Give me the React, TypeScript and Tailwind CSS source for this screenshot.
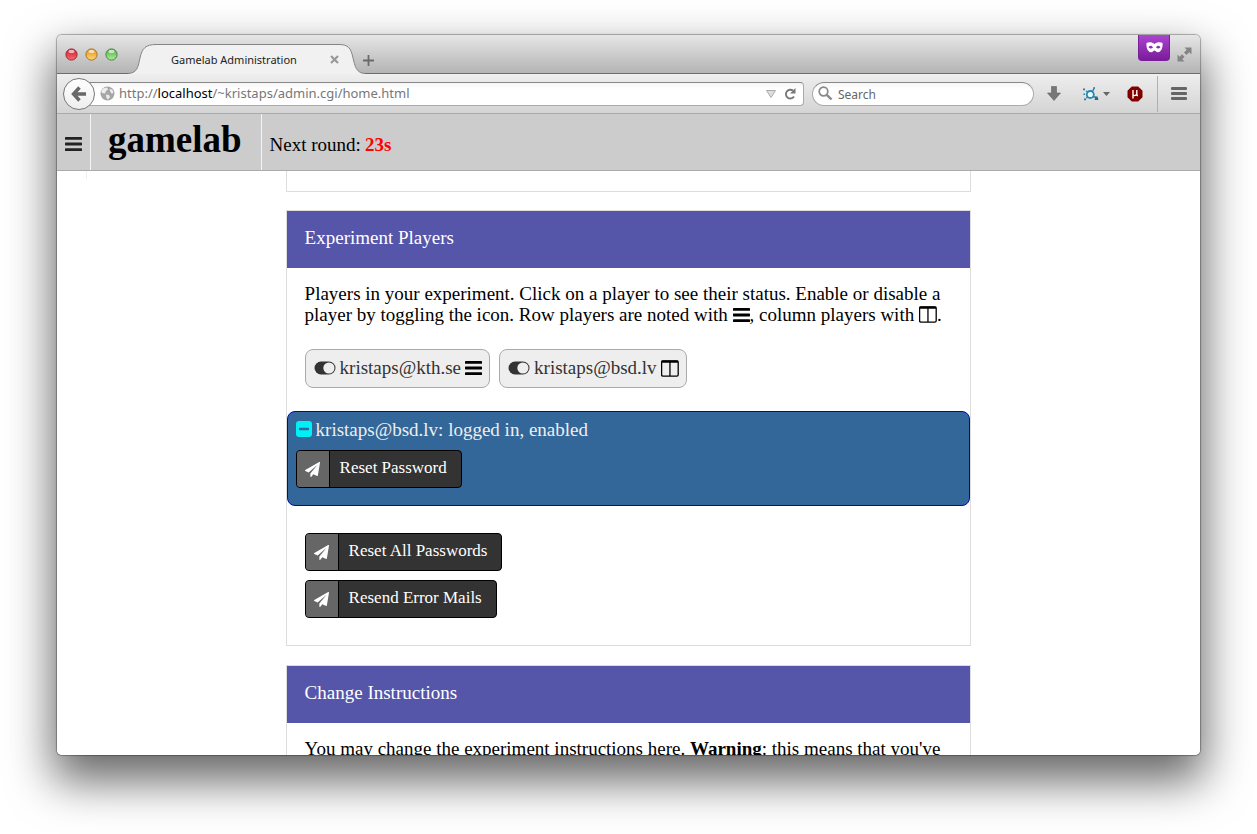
import type { ReactNode } from "react";

const HEADER_CELL = "flex items-center border-r border-[#f4f4f4]";

function BarsIcon({ className = "" }: { className?: string }) {
  return (
    <svg className={className} width="17" height="14" viewBox="0 0 17 14" fill="currentColor" aria-hidden="true">
      <rect x="0" y="0" width="17" height="2.8" rx="0.6" />
      <rect x="0" y="5.6" width="17" height="2.8" rx="0.6" />
      <rect x="0" y="11.2" width="17" height="2.8" rx="0.6" />
    </svg>
  );
}

function ColumnsIcon({ className = "" }: { className?: string }) {
  return (
    <svg className={className} width="18" height="17" viewBox="0 0 18 17" aria-hidden="true">
      <rect x="0.6" y="1" width="16.6" height="15.2" rx="1.4" fill="none" stroke="currentColor" strokeWidth="1.3" />
      <rect x="0.4" y="0.4" width="17" height="2.4" rx="1" fill="currentColor" />
      <rect x="8.3" y="2" width="1.3" height="14" fill="currentColor" />
    </svg>
  );
}

function ToggleIcon() {
  return (
    <svg width="22" height="14" viewBox="0 0 22 14" aria-hidden="true">
      <rect x="0.5" y="0.5" width="21" height="13" rx="6.5" fill="#333" />
      <circle cx="14.9" cy="7" r="5.6" fill="#eee" />
    </svg>
  );
}

function MinusSquare() {
  return (
    <svg width="16" height="16" viewBox="0 0 16 16" aria-hidden="true">
      <rect width="16" height="16" rx="3" fill="#00f0f5" />
      <rect x="3" y="6.800" width="10" height="2.400" rx="0.600" fill="#336699" />
    </svg>
  );
}

function PlaneIcon() {
  return (
    <svg width="15" height="15" viewBox="0 0 1792 1792" fill="currentColor" aria-hidden="true">
      <path d="M1764 11q33 24 27 64l-256 1536q-5 29-32 45-14 8-31 8-11 0-24-5l-453-185-242 295q-18 23-49 23-13 0-22-4-19-7-30.500-23.500t-11.500-36.500v-349l864-1059-1069 925-395-162q-37-14-40-55-2-40 32-59l1664-960q15-9 32-9 20 0 36 11z" />
    </svg>
  );
}

function ActionButton({ children }: { children: ReactNode }) {
  return (
    <button type="button" className="flex h-[38px] items-stretch overflow-hidden rounded border border-black bg-[#333] text-[17px] text-white">
      <span className="flex w-[33px] items-center justify-center border-r border-black bg-[#666]">
        <PlaneIcon />
      </span>
      <span className="self-center pr-[14px] pb-1 pl-[10px]">{children}</span>
    </button>
  );
}

function PlayerChip({ name, icon }: { name: string; icon: ReactNode }) {
  return (
    <div className="flex h-[39px] items-center gap-1 rounded-lg border border-[#aaa] bg-[#eee] pr-[7px] pb-px pl-2 text-[#333]">
      <button type="button" aria-label={`Toggle ${name}`}>
        <ToggleIcon />
      </button>
      <a href="#status" className="pb-px">{name}</a>
      <span className="text-black">{icon}</span>
    </div>
  );
}

function Section({ title, children }: { title: string; children: ReactNode }) {
  return (
    <section className="mb-[19px] border border-[#ddd]">
      <h2 className="bg-[#5555aa] px-[18px] pt-4 pb-5 text-white">{title}</h2>
      {children}
    </section>
  );
}

function Light({ ring, from, to }: { ring: string; from: string; to: string }) {
  const id = `light-${ring.slice(1)}`;
  return (
    <svg width="13" height="13" viewBox="0 0 13 13" aria-hidden="true">
      <defs>
        <linearGradient id={id} x1="0" y1="0" x2="0" y2="1">
          <stop offset="0" stopColor={from} />
          <stop offset="1" stopColor={to} />
        </linearGradient>
      </defs>
      <circle cx="6.500" cy="6.500" r="5.600" fill={`url(#${id})`} stroke={ring} />
      <ellipse cx="6.500" cy="3.400" rx="3" ry="1.600" fill="#fff" opacity="0.65" />
    </svg>
  );
}

function TitleBar() {
  return (
    <div className="flex h-[39px] shrink-0 items-stretch border-b border-[#6d6d6d] bg-linear-to-b from-[#e6e6e6] to-[#b4b4b4]">
      <div className="flex items-start gap-[7px] pt-[13px] pl-2">
        <button type="button" aria-label="Close window"><Light ring="#a32830" from="#c81a2a" to="#ff6a72" /></button>
        <button type="button" aria-label="Minimize window"><Light ring="#a8701c" from="#e08a20" to="#ffdc70" /></button>
        <button type="button" aria-label="Zoom window"><Light ring="#3f8a3a" from="#4fa848" to="#aef298" /></button>
      </div>
      <div className="-mb-px ml-[10px] flex items-end" role="tablist">
        <svg width="28" height="30" viewBox="0 0 28 30" aria-hidden="true">
          <path d="M0 30V29.500C10 29 10 22 12 14C14 4 18 .5 28 .5V30Z" fill="#f1f1f1" />
          <path d="M0 29.500C10 29 10 22 12 14C14 4 18 .5 28 .5" fill="none" stroke="#858585" />
        </svg>
        <div className="flex h-[30px] w-[183px] items-center border-t border-[#858585] bg-[#f1f1f1] pl-[15px]">
          <span role="tab" aria-selected="true" className="grow pt-px text-[11px] text-[#222]">Gamelab Administration</span>
          <button type="button" aria-label="Close tab" className="text-[#999]">
            <svg width="9" height="9" viewBox="0 0 9 9" aria-hidden="true"><path d="M1 1L8 8M8 1L1 8" stroke="currentColor" strokeWidth="2.200" /></svg>
          </button>
        </div>
        <svg width="26" height="30" viewBox="0 0 26 30" aria-hidden="true">
          <path d="M26 30V29.500C17 29 16 22 14 14C12 4 9 .5 0 .5V30Z" fill="#f1f1f1" />
          <path d="M26 29.500C17 29 16 22 14 14C12 4 9 .5 0 .5" fill="none" stroke="#858585" />
        </svg>
      </div>
      <button type="button" aria-label="New tab" className="-ml-[2px] self-end pb-[7px] text-[#6a6a6a]">
        <svg width="11" height="11" viewBox="0 0 11 11" aria-hidden="true"><path d="M5.500 0V11M0 5.500H11" stroke="currentColor" strokeWidth="1.800" /></svg>
      </button>
      <div className="ml-auto flex items-start gap-[7px] pr-2">
        <span className="flex h-[26px] w-8 items-center justify-center rounded-b-sm border border-t-0 border-[#7a1f9a] bg-linear-to-b from-[#ab44cf] to-[#7c1a9b]">
          <svg width="17" height="11" viewBox="0 0 17 11" aria-hidden="true">
            <path fillRule="evenodd" fill="#fff" d="M.5 1C3-.2 6.500.3 8.500 2C10.500.3 14-.2 16.500 1C17 5 15.500 10 12 10.200C10 10.200 9.300 8.500 8.500 8.500C7.700 8.500 7 10.200 5 10.200C1.500 10 0 5 .5 1ZM2.500 5C4 3 6 3.300 7 5.500C5.500 7 3.500 6.800 2.500 5ZM14.500 5C13 3 11 3.300 10 5.500C11.500 7 13.500 6.800 14.500 5Z" />
          </svg>
        </span>
        <button type="button" aria-label="Full screen" className="pt-3 text-[#858585]">
          <svg width="15" height="15" viewBox="0 0 15 15" fill="currentColor" aria-hidden="true">
            <path d="M7.500 .5H14.500V7.500L12.300 5.300L9.500 8L7 5.500L9.700 2.700Z" />
            <path d="M7.500 14.500H.5V7.500L2.700 9.700L5 7.300L7.500 9.800L5.300 12.300Z" />
          </svg>
        </button>
      </div>
    </div>
  );
}

function NavBar() {
  return (
    <div className="flex h-10 shrink-0 items-center border-b border-[#aaa] bg-linear-to-b from-[#eeeeee] to-[#d4d4d4] pl-[6px] text-[12px]">
      <button type="button" aria-label="Back" className="z-10 flex size-8 shrink-0 items-center justify-center rounded-full border border-[#777] bg-linear-to-b from-white to-[#eee]">
        <svg width="16" height="16" viewBox="0 0 16 16" aria-hidden="true">
          <path d="M8.500 1.500L2.500 8L8.500 14.500M3 8H15" fill="none" stroke="#686868" strokeWidth="3.400" />
        </svg>
      </button>
      <div className="-ml-[7px] flex h-6 grow items-center rounded-r border border-[#aaa] border-t-[#888] bg-linear-to-b from-[#f6f6f6] to-white to-30% pr-[7px] pl-[11px]">
        <svg width="15" height="15" viewBox="0 0 15 15" aria-hidden="true">
          <circle cx="7.500" cy="7.500" r="7" fill="#a6a6a6" />
          <path d="M3 2.500L7 1.500L8 3.500L6 5L5 7.500L2 7L1.200 5ZM9.500 3L12 3.500L13.500 6L12 8L10.500 6ZM6 8.500L9 9L10 11L8 13.500L6.500 12Z" fill="#ededed" />
        </svg>
        <a href="#home" className="ml-1 grow pt-px text-[13px] text-[#777]">
          http://<span className="text-black">localhost</span>/~kristaps/admin.cgi/home.html
        </a>
        <button type="button" aria-label="Show history">
          <svg width="10" height="8" viewBox="0 0 10 8" aria-hidden="true"><path d="M.5 .5H9.500L5 7.500Z" fill="#ddd" stroke="#aaa" /></svg>
        </button>
        <button type="button" aria-label="Reload" className="ml-2">
          <svg width="12" height="12" viewBox="0 0 12 12" aria-hidden="true">
            <path d="M9 2.600A4.400 4.400 0 1 0 10 8.500" fill="none" stroke="#777" strokeWidth="1.900" />
            <path d="M11.500 0V5.500H6Z" fill="#777" />
          </svg>
        </button>
      </div>
      <label className="ml-[8px] flex h-6 w-[222px] items-center gap-[5px] rounded-full border border-[#aaa] border-t-[#888] bg-linear-to-b from-[#f6f6f6] to-white to-30% pl-[5px]">
        <svg width="15" height="15" viewBox="0 0 15 15" aria-hidden="true">
          <circle cx="5.500" cy="5.500" r="4.300" fill="none" stroke="#888" strokeWidth="1.700" />
          <path d="M8.800 8.800L13.500 13.500" stroke="#888" strokeWidth="2.400" />
        </svg>
        <input type="text" aria-label="Search" placeholder="Search" className="w-40 bg-transparent pt-[2px] outline-none placeholder:text-[#666]" />
      </label>
      <button type="button" aria-label="Downloads" className="ml-[13px]">
        <svg width="14" height="15" viewBox="0 0 14 15" aria-hidden="true"><path d="M4.500 .5H9.500V7H13.500L7 14.500L.5 7H4.500Z" fill="#777" stroke="#636363" strokeWidth="0.600" /></svg>
      </button>
      <button type="button" aria-label="Extension" className="ml-[22px] flex items-center gap-1">
        <svg width="16" height="14" viewBox="0 0 16 14" aria-hidden="true">
          <circle cx="7.300" cy="7.500" r="3.500" fill="#e8fbff" stroke="#2488ae" strokeWidth="1.800" />
          <path d="M9.500 4.500L11.500 .5M4.500 5L3.300 3.800M4.500 10L3.400 11.200M10 9.500L13 10.500" stroke="#2a7f9f" strokeWidth="1.400" />
          <path d="M0 1.500H2V3.300H0ZM.5 6.500H2V8H.5ZM1 11.500H3V13.200H1ZM10.500 .3H12V1.500H10.500Z" fill="#2a7f9f" />
          <path d="M12.500 9.500H14.500L15.500 13H11.500Z" fill="#1f6e8c" />
        </svg>
        <svg width="7" height="4" viewBox="0 0 7 4" aria-hidden="true"><path d="M0 0H7L3.500 4Z" fill="#666" /></svg>
      </button>
      <button type="button" aria-label="Content blocker" className="ml-[17px]">
        <svg width="16" height="16" viewBox="0 0 16 16" aria-hidden="true">
          <path d="M4.800 .5H11.200L15.500 4.800V11.200L11.200 15.500H4.800L.5 11.200V4.800Z" fill="#800000" />
          <path d="M6 4V12.500M6 4V8.300Q6 9.600 7.600 9.600T9.800 8M9.800 4V8.700Q9.800 9.700 11 9.500" fill="none" stroke="#fff" strokeWidth="1.400" />
        </svg>
      </button>
      <button type="button" aria-label="Open menu" className="ml-[14px] flex h-9 items-center border-l border-[#aab2b8] px-[13px]">
        <svg width="16" height="14" viewBox="0 0 16 14" fill="#666" aria-hidden="true">
          <rect width="16" height="3" y="0" rx="1" /><rect width="16" height="3" y="5" rx="1" /><rect width="16" height="3" y="10" rx="1" />
        </svg>
      </button>
    </div>
  );
}

export default function App() {
  return (
    <div className="flex h-screen flex-col overflow-hidden bg-white px-[57px] pt-[35px] pb-[79px]">
      <div className="flex min-h-0 grow flex-col overflow-hidden rounded-[5px] shadow-[0_0_1px_1px_rgba(0,0,0,0.3),0_22px_46px_4px_rgba(0,0,0,0.6)]">
        <div className="shrink-0 font-['Noto_Sans',sans-serif]">
          <TitleBar />
          <NavBar />
        </div>
        <div className="flex min-h-0 grow flex-col overflow-hidden bg-white font-['Liberation_Serif',serif] text-[19px] leading-[21px] text-black">
          <header className="flex h-[57px] shrink-0 items-stretch border-b border-[#aaa] bg-[#ccc]">
            <button type="button" aria-label="Menu" className={`${HEADER_CELL} w-[34px] justify-center pt-1 text-[#222]`}>
              <BarsIcon />
            </button>
            <h1 className={`${HEADER_CELL} pr-[19px] pb-1 pl-[17px] text-[37px] leading-[42px] font-bold`}>gamelab</h1>
            <p className="flex items-center gap-1 pt-1 pl-2">
              Next round: <strong className="text-[#f00]">23s</strong>
            </p>
          </header>
          <main className="relative min-h-0 grow overflow-hidden">
            <div className="absolute top-0 left-[29px] h-2 w-px bg-[#eee]" />
            <div className="mx-auto w-[60%]">
              <div className="mb-[18px] h-[21px] border border-t-0 border-[#ddd]" />
              <Section title="Experiment Players">
                <p className="px-[18px] pt-[15px]">
                  Players in your experiment. Click on a player to see their status. Enable or disable a player by toggling the
                  icon. Row players are noted with <BarsIcon className="inline align-[-1px]" />, column players with{" "}
                  <ColumnsIcon className="inline align-[-2px]" />.
                </p>
                <div className="flex gap-[9px] px-[18px] pt-6 pb-[23px]">
                  <PlayerChip name="kristaps@kth.se" icon={<BarsIcon />} />
                  <PlayerChip name="kristaps@bsd.lv" icon={<ColumnsIcon />} />
                </div>
                <div className="rounded-lg border border-[#00d] bg-[#336699] px-2 pt-[7px] pb-[17px]">
                  <p className="mb-[10px] flex items-start gap-1 text-[#eee]">
                    <button type="button" aria-label="Collapse" className="pt-[2px]"><MinusSquare /></button>
                    kristaps@bsd.lv: logged in, enabled
                  </p>
                  <ActionButton>Reset Password</ActionButton>
                </div>
                <div className="flex flex-col items-start gap-[9px] px-[18px] pt-[27px] pb-[27px]">
                  <ActionButton>Reset All Passwords</ActionButton>
                  <ActionButton>Resend Error Mails</ActionButton>
                </div>
              </Section>
              <Section title="Change Instructions">
                <p className="px-[18px] pt-[15px] pb-6">
                  You may change the experiment instructions here. <strong>Warning</strong>: this means that you've
                </p>
              </Section>
            </div>
          </main>
        </div>
      </div>
    </div>
  );
}
